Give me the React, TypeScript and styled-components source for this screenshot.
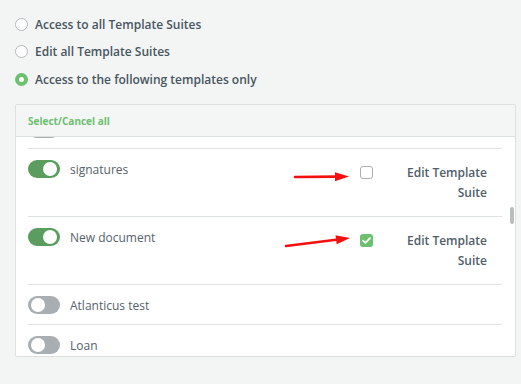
import React from 'react';
import styled, { createGlobalStyle } from 'styled-components';

const GlobalStyle = createGlobalStyle`
  body {
    margin: 0;
    background: #f3f4f4;
    font-family: 'Open Sans', 'Liberation Sans', sans-serif;
  }
`;

const Page = styled.div`
  padding: 14px 5px 0 15px;
`;

const RadioList = styled.div`
  display: flex;
  flex-direction: column;
  gap: 7.5px;
`;

const RadioItem = styled.label`
  display: flex;
  align-items: center;
  gap: 7px;
  height: 20px;
  font-size: 12px;
  font-weight: 600;
  color: #475661;
`;

const RadioDot = styled.span<{ checked?: boolean }>`
  box-sizing: border-box;
  width: 13px;
  height: 13px;
  border-radius: 50%;
  background: #fff;
  border: ${(p) => (p.checked ? '4.5px solid #6cc070' : '1px solid #b4b9bd')};
`;

const Panel = styled.div`
  margin-top: 15px;
  border: 1px solid #dde0e1;
  border-radius: 2px;
  background: #fff;
`;

const PanelHeader = styled.div`
  display: flex;
  align-items: center;
  height: 31px;
  padding-left: 12px;
  background: #f4f5f5;
  border-bottom: 1px solid #dde0e1;
  font-size: 10px;
  font-weight: 700;
  color: #6cc070;
`;

const List = styled.div`
  position: relative;
  height: 219px;
  overflow: hidden;
  padding: 0 13px 0 12px;
`;

// the list is scrolled a little: the row above "signatures" is mostly hidden
const ListInner = styled.div`
  margin-top: -28px;
`;

const ScrollThumb = styled.div`
  position: absolute;
  top: 70px;
  right: 1px;
  width: 4px;
  height: 17px;
  border-radius: 2px;
  background: #b9bdc0;
`;

const Row = styled.div`
  display: flex;
  align-items: flex-start;
  padding: 11px 0 10px;
  border-bottom: 1px solid #dfe2e3;
`;

const Toggle = styled.span<{ on?: boolean }>`
  position: relative;
  flex: none;
  width: 32px;
  height: 18px;
  border-radius: 9px;
  background: ${(p) => (p.on ? '#5a9d5e' : '#a9aeb3')};

  &::after {
    content: '';
    position: absolute;
    top: 2px;
    ${(p) => (p.on ? 'right: 3px;' : 'left: 3px;')}
    width: 14px;
    height: 14px;
    border-radius: 50%;
    background: #fff;
  }
`;

const Label = styled.span`
  flex: 1;
  margin-left: 10px;
  font-size: 12px;
  line-height: 18px;
  padding-top: 1px;
  height: 17px;
  color: #55626c;
`;

const RightGroup = styled.div`
  display: flex;
  align-items: flex-start;
  gap: 24px;
  margin-right: 15px;
`;

const CheckCell = styled.span`
  position: relative;
  margin-top: 6px;
`;

const Checkbox = styled.span<{ checked?: boolean }>`
  box-sizing: border-box;
  display: flex;
  align-items: center;
  justify-content: center;
  width: 13px;
  height: 13px;
  border-radius: 3px;
  background: ${(p) => (p.checked ? '#6cc070' : '#fff')};
  border: ${(p) => (p.checked ? 'none' : '1px solid #a8afb4')};
`;

const EditText = styled.div`
  width: 90px;
  padding: 3px 0;
  text-align: right;
  font-size: 12px;
  font-weight: 600;
  line-height: 20px;
  color: #4f5e69;
`;

const ArrowSvg = styled.svg`
  position: absolute;
  left: -80px;
  top: 0;
  overflow: visible;
`;

type Arrow = { tail: [number, number]; tip: [number, number] };

const RedArrow: React.FC<{ arrow: Arrow }> = ({ arrow }) => {
  const [tx, ty] = arrow.tail;
  const [px, py] = arrow.tip;
  const dx = px - tx;
  const dy = py - ty;
  const len = Math.hypot(dx, dy);
  const ux = dx / len;
  const uy = dy / len;
  const bx = px - ux * 14;
  const by = py - uy * 14;
  const nx = -uy * 4.5;
  const ny = ux * 4.5;
  return (
    <ArrowSvg width="70" height="20">
      <line x1={tx} y1={ty} x2={bx + ux * 2} y2={by + uy * 2} stroke="#f51010" strokeWidth="2.6" strokeLinecap="round" />
      <polygon points={`${px},${py} ${bx + nx},${by + ny} ${bx - nx},${by - ny}`} fill="#f51010" />
    </ArrowSvg>
  );
};

type Template = {
  id: string;
  name: string;
  on: boolean;
  edit?: boolean;
  checked?: boolean;
  arrow?: Arrow;
};

const templates: Template[] = [
  { id: 'prev', name: '', on: false },
  { id: 'sig', name: 'signatures', on: true, edit: true, checked: false, arrow: { tail: [15, 11], tip: [69, 10.5] } },
  { id: 'new', name: 'New document', on: true, edit: true, checked: true, arrow: { tail: [6, 12], tip: [70, 4] } },
  { id: 'atl', name: 'Atlanticus test', on: false },
  { id: 'loan', name: 'Loan', on: false },
];

const CheckMark = () => (
  <svg width="9" height="7" viewBox="0 0 9 7">
    <path d="M1 3.6 L3.4 5.8 L8 1.2" fill="none" stroke="#fff" strokeWidth="1.8" strokeLinecap="round" strokeLinejoin="round" />
  </svg>
);

export default function App() {
  return (
    <Page>
      <GlobalStyle />
      <RadioList>
        <RadioItem>
          <RadioDot />
          Access to all Template Suites
        </RadioItem>
        <RadioItem>
          <RadioDot />
          Edit all Template Suites
        </RadioItem>
        <RadioItem>
          <RadioDot checked />
          Access to the following templates only
        </RadioItem>
      </RadioList>
      <Panel>
        <PanelHeader>Select/Cancel all</PanelHeader>
        <List>
          <ListInner>
            {templates.map((t) => (
              <Row key={t.id}>
                <Toggle on={t.on} />
                <Label>{t.name}</Label>
                {t.edit && (
                  <RightGroup>
                    <CheckCell>
                      {t.arrow && <RedArrow arrow={t.arrow} />}
                      <Checkbox checked={t.checked}>{t.checked && <CheckMark />}</Checkbox>
                    </CheckCell>
                    <EditText>
                      Edit Template
                      <br />
                      Suite
                    </EditText>
                  </RightGroup>
                )}
              </Row>
            ))}
          </ListInner>
          <ScrollThumb />
        </List>
      </Panel>
    </Page>
  );
}
